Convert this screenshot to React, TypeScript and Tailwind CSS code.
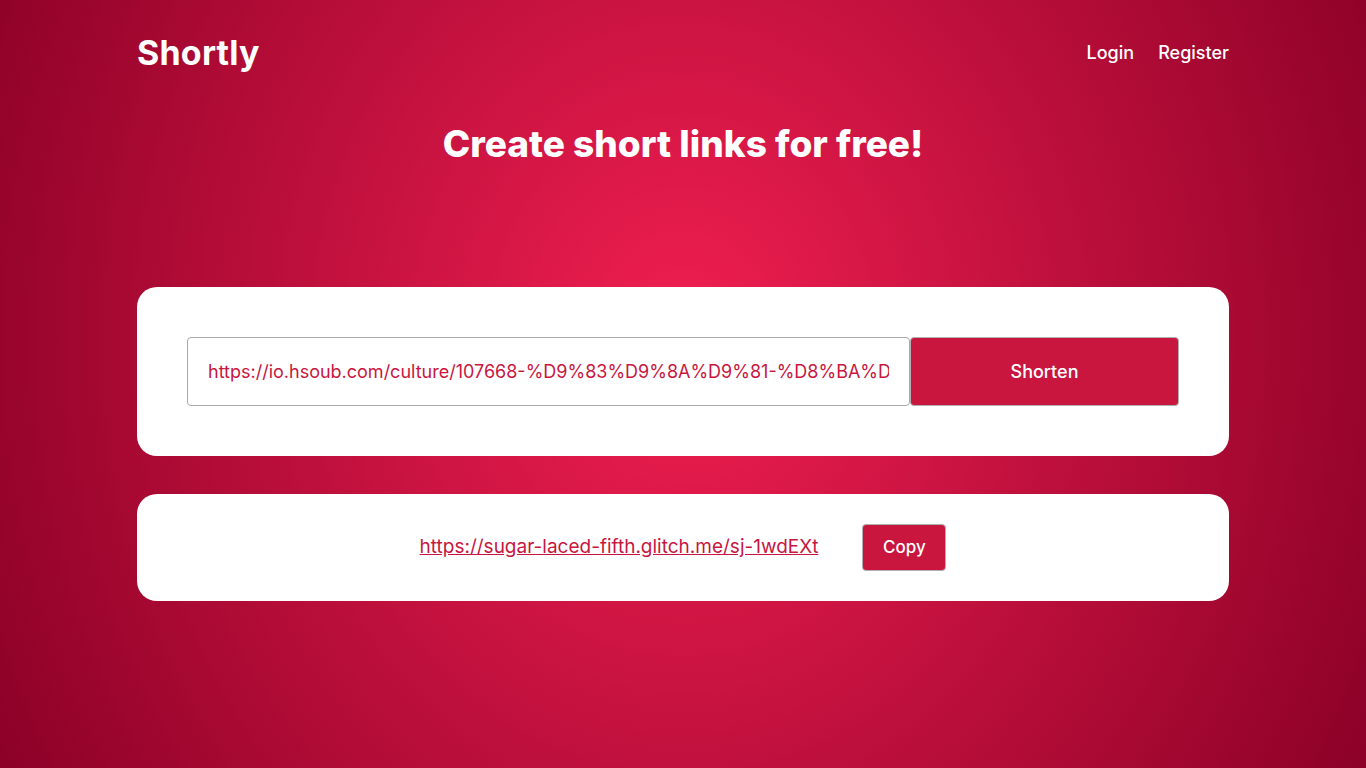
import React from "react";

export default function App() {
  const font = { fontFamily: '"Inter", "Open Sans", sans-serif' };
  return (
    <div
      className="min-h-screen w-full bg-[radial-gradient(ellipse_790px_920px_at_50%_44%,#f01f51_0%,#8a0026_100%)] text-white"
      style={font}
    >
      <div className="mx-auto w-[1092px]">
        <header className="flex h-[104px] items-center justify-between">
          <div className="text-[34px] font-bold tracking-[0.2px]">Shortly</div>
          <nav className="flex items-center gap-[24px] text-[18px] font-medium">
            <a href="#">Login</a>
            <a href="#">Register</a>
          </nav>
        </header>
        <h1 className="mt-[16px] text-center text-[37px] font-extrabold leading-[48px]">
          Create short links for free!
        </h1>
        <div className="mt-[119px] rounded-[20px] bg-white p-[50px]">
          <div className="flex h-[69px]">
            <input
              readOnly
              value="https://io.hsoub.com/culture/107668-%D9%83%D9%8A%D9%81-%D8%BA%D9%8A%D9%8A"
              className="h-full min-w-0 flex-1 rounded-[4px] border border-[#a9a9a9] px-[20px] text-[18px] text-[#c8163f] outline-none"
              style={font}
            />
            <button className="h-full w-[269px] rounded-[4px] border border-[#b0b0b0] bg-[#c8163f] text-[18px] font-medium text-white">
              Shorten
            </button>
          </div>
        </div>
        <div className="mt-[38px] flex h-[107px] items-center justify-center gap-[44px] rounded-[20px] bg-white">
          <a href="#" className="text-[19px] text-[#c8163f] underline">
            https://sugar-laced-fifth.glitch.me/sj-1wdEXt
          </a>
          <button className="h-[47px] w-[84px] rounded-[4px] border border-[#b0b0b0] bg-[#c8163f] text-[17px] font-medium text-white">
            Copy
          </button>
        </div>
      </div>
    </div>
  );
}
